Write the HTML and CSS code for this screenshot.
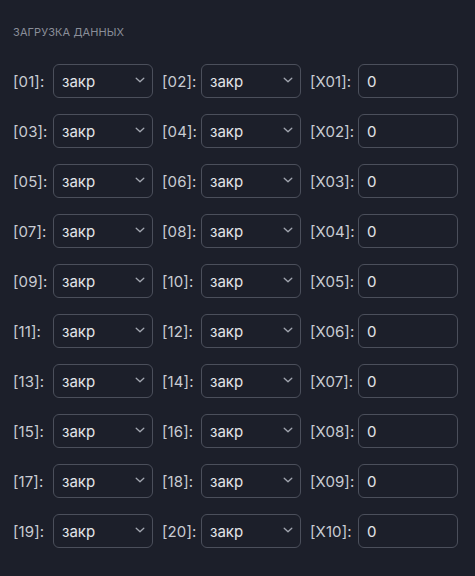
FILE: index.html
```html
<!DOCTYPE html>
<html lang="ru">
<head>
<meta charset="utf-8">
<link rel="stylesheet" href="styles.css">
</head>
<body>
<div class="panel">
  <div class="title">ЗАГРУЗКА ДАННЫХ</div>
  <div class="grid" id="grid"></div>
</div>
<script>
  var g = document.getElementById('grid');
  var chev = '<svg class="chev" width="10" height="6" viewBox="0 0 10 6"><path d="M1.2 1.2l3.8 3.6 3.8-3.6" fill="none" stroke="currentColor" stroke-width="1.3" stroke-linecap="round" stroke-linejoin="round"/></svg>';
  function pad(n){return n<10?'0'+n:''+n;}
  var html='';
  for (var i=0;i<10;i++){
    var a=pad(i*2+1), b=pad(i*2+2), x='X'+pad(i+1);
    html += '<span class="lbl">['+a+']:</span><div class="sel"><span>закр</span>'+chev+'</div>';
    html += '<span class="lbl">['+b+']:</span><div class="sel"><span>закр</span>'+chev+'</div>';
    html += '<span class="lbl">['+x+']:</span><div class="inp">0</div>';
  }
  g.innerHTML = html;
</script>
</body>
</html>
```
FILE: styles.css
```css
html, body {
  margin: 0;
  padding: 0;
  background: #1c1f2a;
  width: 475px;
  height: 576px;
  overflow: hidden;
}
.panel {
  padding: 26px 0 0 13px;
  font-family: Inter, "Noto Sans", sans-serif;
}
.title {
  font-size: 11px;
  color: #8a8e99;
  letter-spacing: 0.1px;
  line-height: 13px;
  height: 13px;
}
.grid {
  margin-top: 25px;
  display: grid;
  grid-template-columns: 31px 100px 30px 100px 39px 100px;
  column-gap: 9px;
  row-gap: 16px;
  align-items: center;
}
.lbl {
  font-size: 15px;
  color: #c9ccd3;
  white-space: nowrap;
  letter-spacing: 0.1px;
}
.sel, .inp {
  box-sizing: border-box;
  height: 34px;
  border: 1px solid #4b4f5b;
  border-radius: 6px;
  display: flex;
  align-items: center;
  padding: 0 0 0 8px;
  font-size: 15px;
  color: #e3e5e9;
}
.sel span { flex: 1; }
.chev {
  color: #a2a6b0;
  margin-right: 7px;
  margin-top: -2px;
}
```
